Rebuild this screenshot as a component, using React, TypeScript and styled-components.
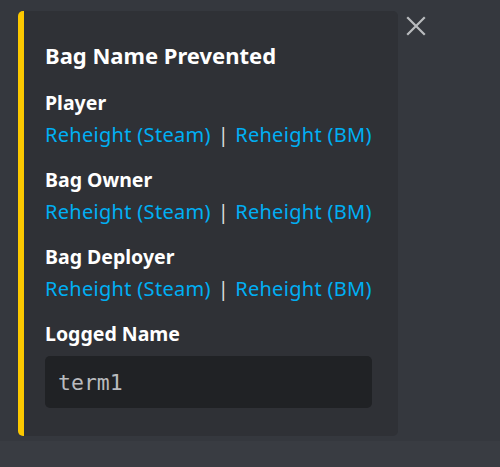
import React from "react";
import styled, { createGlobalStyle } from "styled-components";

const GlobalStyle = createGlobalStyle`
  html, body {
    margin: 0;
    padding: 0;
    background: #36393f;
  }
  body {
    font-family: "Noto Sans", "Open Sans", sans-serif;
  }
`;

const Page = styled.div`
  display: flex;
  flex-direction: column;
  width: 500px;
  height: 467px;
  overflow: hidden;
  background: #35383e;
`;

const Main = styled.div`
  display: flex;
  align-items: flex-start;
  gap: 7px;
  padding: 11px 0 0 18px;
  height: 441px;
  box-sizing: border-box;
`;

const Embed = styled.div`
  display: flex;
  flex-direction: column;
  width: 380px;
  height: 425px;
  box-sizing: border-box;
  padding: 30px 20px 0 21px;
  background: #2f3136;
  border-left: 6px solid #fcc800;
  border-radius: 5px;
`;

const Title = styled.div`
  color: #ffffff;
  font-size: 22px;
  font-weight: 700;
  line-height: 28px;
  margin-bottom: 21px;
`;

const Field = styled.div`
  display: flex;
  flex-direction: column;
  margin-bottom: 19px;
`;

const FieldName = styled.div<{ $gap?: number }>`
  color: #ffffff;
  font-size: 19.5px;
  font-weight: 700;
  line-height: 26px;
  margin-bottom: ${(p) => p.$gap ?? 6}px;
`;

const FieldValue = styled.div`
  display: flex;
  align-items: center;
  color: #dcddde;
  font-size: 20px;
  letter-spacing: 0.3px;
  line-height: 26px;
  white-space: nowrap;
`;

const Link = styled.span`
  color: #00aff4;
`;

const Separator = styled.span`
  margin: 0 6px 0 7px;
`;

const CodeBlock = styled.div`
  display: flex;
  align-items: center;
  width: 327px;
  height: 52px;
  box-sizing: border-box;
  padding: 0 13px;
  background: #202225;
  border-radius: 5px;
  color: #b9bbbe;
  font-family: "DejaVu Sans Mono", "Liberation Mono", monospace;
  font-size: 21.5px;
`;

const CloseButton = styled.button`
  display: flex;
  align-items: center;
  justify-content: center;
  margin-top: 4px;
  width: 22px;
  height: 22px;
  padding: 0;
  border: none;
  background: transparent;
  color: #b9bbbe;
`;

const Footer = styled.div`
  flex: 1;
  background: #393c42;
`;

const Links = () => (
  <FieldValue>
    <Link>Reheight (Steam)</Link>
    <Separator>|</Separator>
    <Link>Reheight (BM)</Link>
  </FieldValue>
);

export default function App() {
  return (
    <>
      <GlobalStyle />
      <Page>
        <Main>
          <Embed>
            <Title>Bag Name Prevented</Title>
            <Field>
              <FieldName>Player</FieldName>
              <Links />
            </Field>
            <Field>
              <FieldName>Bag Owner</FieldName>
              <Links />
            </Field>
            <Field>
              <FieldName>Bag Deployer</FieldName>
              <Links />
            </Field>
            <Field>
              <FieldName $gap={9}>Logged Name</FieldName>
              <CodeBlock>term1</CodeBlock>
            </Field>
          </Embed>
          <CloseButton aria-label="Close">
            <svg width="20" height="20" viewBox="0 0 20 20">
              <path
                d="M2 2 L18 18 M18 2 L2 18"
                stroke="currentColor"
                strokeWidth="2.2"
                strokeLinecap="square"
              />
            </svg>
          </CloseButton>
        </Main>
        <Footer />
      </Page>
    </>
  );
}
